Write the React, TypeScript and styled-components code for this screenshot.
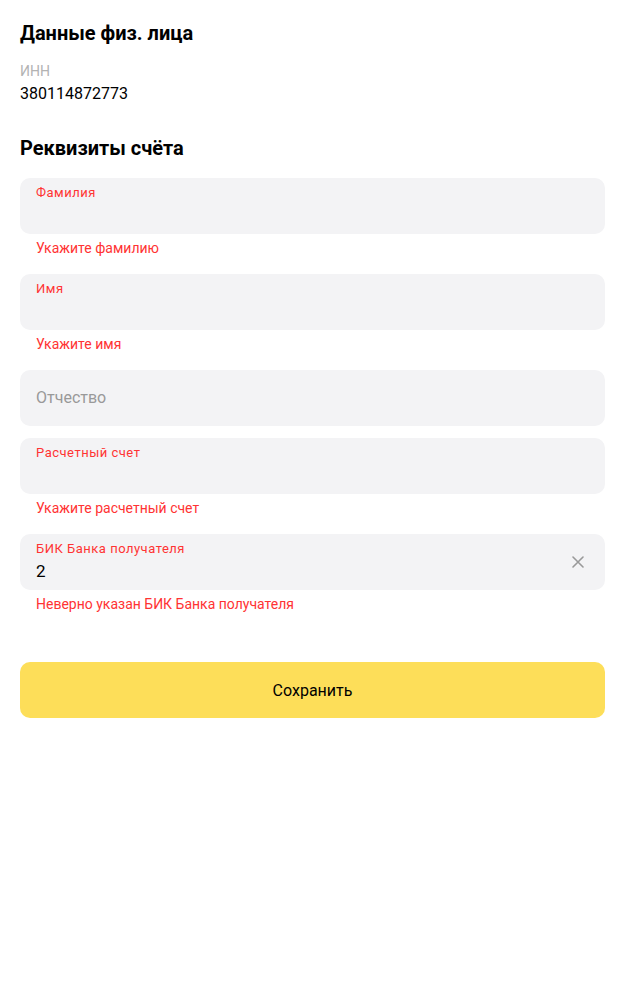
import React from "react";
import styled, { createGlobalStyle } from "styled-components";

const GlobalStyle = createGlobalStyle`
  html, body { margin: 0; padding: 0; background: #fff; }
  body { font-family: Roboto, "Noto Sans", Arial, sans-serif; color: #000; -webkit-font-smoothing: antialiased; }
  * { box-sizing: border-box; }
`;

const Page = styled.div`
  padding: 21px 20px 40px;
  display: flex;
  flex-direction: column;
`;

const Title = styled.h2<{ $mt?: number }>`
  margin: ${(p) => p.$mt ?? 0}px 0 0;
  font-size: 20px;
  line-height: 24px;
  font-weight: 700;
`;

const InfoLabel = styled.div`
  margin-top: 17px;
  font-size: 14px;
  line-height: 18px;
  color: #b3b3b3;
`;

const InfoValue = styled.div`
  margin-top: 4px;
  font-size: 16px;
  line-height: 20px;
`;

const Fields = styled.div`
  margin-top: 18px;
  display: flex;
  flex-direction: column;
  gap: 12px;
`;

const FieldWrap = styled.div`
  display: flex;
  flex-direction: column;
`;

const Box = styled.div`
  position: relative;
  height: 56px;
  border-radius: 10px;
  background: #f3f3f5;
  padding: 7px 16px 0;
  display: flex;
  flex-direction: column;
`;

const FloatLabel = styled.div<{ $error?: boolean }>`
  font-size: 13px;
  line-height: 16px;
  color: ${(p) => (p.$error ? "#ff3333" : "#999")};
  letter-spacing: 0.5px;
`;

const Value = styled.div`
  margin-top: 4px;
  font-size: 17px;
  line-height: 20px;
  color: #000;
`;

const Placeholder = styled.div`
  margin-top: 11px;
  font-size: 16px;
  line-height: 20px;
  color: #999;
`;

const ErrorText = styled.div`
  padding: 4px 16px;
  font-size: 14px;
  line-height: 20px;
  color: #ff3333;
`;

const ClearButton = styled.button`
  position: absolute;
  right: 21px;
  top: 22px;
  width: 12px;
  height: 12px;
  padding: 0;
  border: none;
  background: none;
  display: flex;
  align-items: center;
  justify-content: center;
  cursor: pointer;
`;

const SaveButton = styled.button`
  margin-top: 44px;
  height: 56px;
  width: 100%;
  border: none;
  border-radius: 10px;
  background: #fdde59;
  font-family: inherit;
  font-size: 16px;
  color: #000;
  cursor: pointer;
`;

type FieldProps = {
  label: string;
  value?: string;
  error?: string;
  clearable?: boolean;
};

const Field: React.FC<FieldProps> = ({ label, value, error, clearable }) => {
  const filledLabel = error !== undefined || value !== undefined;
  return (
    <FieldWrap>
      <Box>
        {filledLabel ? (
          <>
            <FloatLabel $error={!!error}>{label}</FloatLabel>
            {value !== undefined && <Value>{value}</Value>}
          </>
        ) : (
          <Placeholder>{label}</Placeholder>
        )}
        {clearable && (
          <ClearButton aria-label="clear">
            <svg width="12" height="12" viewBox="0 0 12 12">
              <path d="M1 1L11 11M11 1L1 11" stroke="#999" strokeWidth="1.6" strokeLinecap="round" />
            </svg>
          </ClearButton>
        )}
      </Box>
      {error && <ErrorText>{error}</ErrorText>}
    </FieldWrap>
  );
};

export default function App() {
  return (
    <>
      <GlobalStyle />
      <Page>
        <Title>Данные физ. лица</Title>
        <InfoLabel>ИНН</InfoLabel>
        <InfoValue>380114872773</InfoValue>
        <Title $mt={32}>Реквизиты счёта</Title>
        <Fields>
          <Field label="Фамилия" error="Укажите фамилию" />
          <Field label="Имя" error="Укажите имя" />
          <Field label="Отчество" />
          <Field label="Расчетный счет" error="Укажите расчетный счет" />
          <Field label="БИК Банка получателя" value="2" error="Неверно указан БИК Банка получателя" clearable />
        </Fields>
        <SaveButton>Сохранить</SaveButton>
      </Page>
    </>
  );
}
